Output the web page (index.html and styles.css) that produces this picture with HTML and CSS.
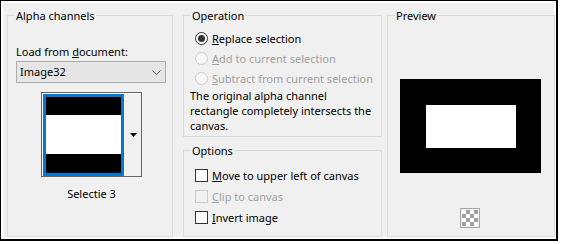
FILE: index.html
```html
<!DOCTYPE html>
<html lang="en">
<head>
    <meta charset="UTF-8">
    <meta name="viewport" content="width=device-width, initial-scale=1.0">
    <title>Alpha channels</title>
    <link rel="stylesheet" href="styles.css">
</head>
<body>
    <div class="dialog">
        <!-- Source channel -->
        <fieldset class="group group-alpha">
            <legend>Alpha channels</legend>
            <div class="alpha-body">
                <label class="field-label">Load from <u>d</u>ocument:</label>
                <div class="select">
                    <span>Image32</span>
                    <svg class="chevron" width="9" height="5" viewBox="0 0 9 5"><path d="M0.5 0.5 L4.5 4.5 L8.5 0.5" fill="none" stroke="#555" stroke-width="1"/></svg>
                </div>
                <div class="thumb">
                    <div class="thumb-frame">
                        <div class="thumb-img">
                            <div class="band band-top"></div>
                            <div class="band band-mid"></div>
                            <div class="band band-bottom"></div>
                        </div>
                    </div>
                    <div class="thumb-drop">
                        <svg width="7" height="4" viewBox="0 0 7 4"><polygon points="0,0 7,0 3.5,4" fill="#000"/></svg>
                    </div>
                </div>
                <div class="thumb-caption">Selectie 3</div>
            </div>
        </fieldset>

        <div class="middle-col">
            <!-- Operation -->
            <fieldset class="group group-operation">
                <legend>Operation</legend>
                <div class="op-body">
                    <div class="choice"><span class="radio checked"></span><span><u>R</u>eplace selection</span></div>
                    <div class="choice disabled"><span class="radio"></span><span><u>A</u>dd to current selection</span></div>
                    <div class="choice disabled"><span class="radio"></span><span><u>S</u>ubtract from current selection</span></div>
                    <p class="note">The original alpha channel<br>rectangle completely intersects the<br>canvas.</p>
                </div>
            </fieldset>

            <!-- Options -->
            <fieldset class="group group-options">
                <legend>Options</legend>
                <div class="opt-body">
                    <div class="choice check-row"><span class="check"></span><span><u>M</u>ove to upper left of canvas</span></div>
                    <div class="choice check-row disabled"><span class="check"></span><span><u>C</u>lip to canvas</span></div>
                    <div class="choice check-row"><span class="check"></span><span><u>I</u>nvert image</span></div>
                </div>
            </fieldset>
        </div>

        <!-- Preview -->
        <fieldset class="group group-preview">
            <legend>Preview</legend>
            <div class="preview-body">
                <div class="preview-canvas"><div class="preview-sel"></div></div>
                <div class="checker"></div>
            </div>
        </fieldset>
    </div>
</body>
</html>
```

FILE: styles.css
```css
* {
    margin: 0;
    padding: 0;
    box-sizing: border-box;
}

body {
    font-family: "Noto Sans", "Open Sans", sans-serif;
    font-size: 11px;
    line-height: 15px;
    color: #000;
    background: #fff;
}

u {
    text-underline-offset: 1px;
}

.dialog {
    display: flex;
    align-items: flex-start;
    width: 558px;
    height: 241px;
    padding: 7px 0 0 6px;
    background: #f0f0f0;
    border: solid #000;
    border-width: 1px 2px 2px 1px;
    box-shadow: inset 0 0 0 2px #fff;
}

/* group boxes */
.group {
    border: 1px solid #dcdcdc;
    min-width: 0;
}

.group legend {
    margin-left: 7px;
    padding: 0 1px;
    line-height: 15px;
}

.group-alpha {
    width: 166px;
    height: 229px;
    margin-right: 10px;
}

.middle-col {
    width: 199px;
    margin-right: 5px;
    display: flex;
    flex-direction: column;
    gap: 6px;
}

.group-operation {
    height: 129px;
}

.group-options {
    height: 94px;
}

.group-preview {
    width: 168px;
    height: 229px;
}

/* alpha channels */
.alpha-body {
    padding: 21px 0 0 8px;
}

.field-label {
    display: block;
}

.select {
    display: flex;
    align-items: center;
    justify-content: space-between;
    width: 150px;
    height: 22px;
    margin-top: 2px;
    padding: 0 4px 0 3px;
    line-height: 20px;
    background: #e5e5e5;
    border: 1px solid #adadad;
}

.thumb {
    display: flex;
    width: 101px;
    height: 85px;
    margin: 9px 0 0 25px;
    background: #fff;
    border: 1px solid #646464;
}

.thumb-frame {
    padding: 1px 0 0 1px;
}

.thumb-img {
    display: flex;
    flex-direction: column;
    width: 81px;
    height: 82px;
    border: 3px solid #0078d7;
}

.band-top {
    height: 18px;
    background: #000;
}

.band-mid {
    height: 39px;
    background: #fff;
}

.band-bottom {
    flex: 1;
    background: #000;
}

.thumb-drop {
    flex: 1;
    display: flex;
    align-items: center;
    justify-content: center;
    margin-top: 1px;
    background: #f0f0f0;
    border-left: 1px solid #fff;
}

.thumb-caption {
    width: 101px;
    margin: 9px 0 0 25px;
    text-align: center;
}

/* radios and checkboxes */
.op-body {
    padding: 5px 0 0 6px;
}

.opt-body {
    padding: 7px 0 0 6px;
}

.choice {
    display: flex;
    align-items: center;
    gap: 4px;
    height: 20px;
    padding-left: 5px;
    white-space: nowrap;
}

.check-row {
    height: 21px;
}

.choice.disabled {
    color: #a0a0a0;
}

.radio {
    display: flex;
    align-items: center;
    justify-content: center;
    width: 13px;
    height: 13px;
    border: 1px solid #333;
    border-radius: 50%;
    background: #fff;
}

.radio.checked::after {
    content: "";
    width: 7px;
    height: 7px;
    border-radius: 50%;
    background: #333;
}

.disabled .radio {
    border-color: #cccccc;
    background: #f7f7f7;
}

.check {
    width: 13px;
    height: 13px;
    border: 1px solid #333;
    background: #fff;
}

.disabled .check {
    border-color: #cccccc;
    background: #f0f0f0;
}

.note {
    margin-top: 0;
}

/* preview */
.preview-body {
    padding: 56px 0 0 12px;
}

.preview-canvas {
    width: 141px;
    height: 94px;
    padding: 26px 0 0 26px;
    background: #000;
}

.preview-sel {
    width: 90px;
    height: 43px;
    background: #fff;
}

.checker {
    width: 20px;
    height: 20px;
    margin: 35px 0 0 60px;
    padding: 1px;
    border: 1px solid #a8a8a8;
    background: repeating-conic-gradient(#a0a0a0 0% 25%, #fff 0% 50%) content-box 0 0 / 8px 8px;
}
```
